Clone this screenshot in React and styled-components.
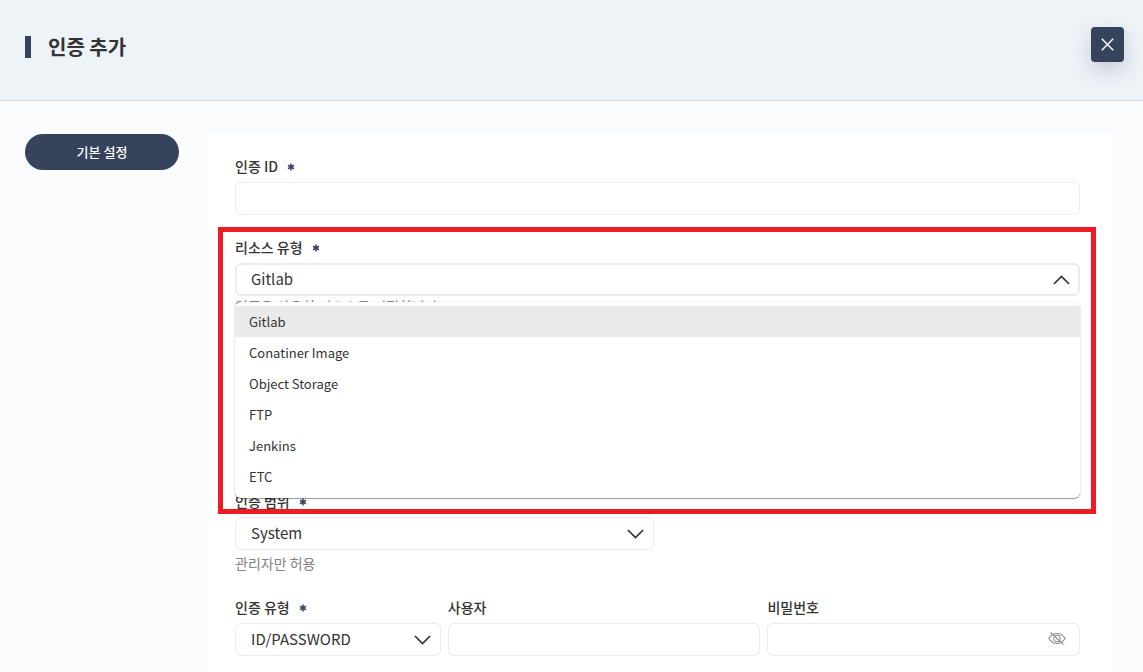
import React, { useState } from "react";
import styled, { createGlobalStyle } from "styled-components";

const navy = "#36435c";
const ink = "#333333";
const line = "#ebebeb";

const GlobalStyle = createGlobalStyle`
  *, *::before, *::after { box-sizing: border-box; }
  body {
    margin: 0;
    background: #fafbfd;
    color: ${ink};
    font-family: "Noto Sans CJK KR", "Noto Sans", sans-serif;
    font-size: 14px;
    line-height: 20px;
  }
  button, input, select { font: inherit; color: inherit; margin: 0; }
`;

const Page = styled.div`
  min-height: 100vh;
  display: flex;
  flex-direction: column;
`;

const Header = styled.header`
  display: flex;
  align-items: flex-start;
  justify-content: space-between;
  height: 101px;
  padding: 27px 19px 0 25px;
  background: #eef3f8;
  border-bottom: 1px solid #cad3e2;
`;

const Title = styled.h1`
  display: flex;
  align-items: center;
  gap: 17px;
  margin: 0;
  font-size: 20px;
  line-height: 40px;
  font-weight: 700;

  &::before {
    content: "";
    width: 6px;
    height: 22px;
    background: ${navy};
  }
`;

const CloseButton = styled.button`
  display: grid;
  place-items: center;
  width: 33px;
  height: 35px;
  padding: 0;
  border: 0;
  border-radius: 4px;
  background: ${navy};
  color: #fff;
  box-shadow: 0 8px 20px rgba(62, 57, 107, 0.22);
  cursor: pointer;
`;

const Main = styled.main`
  flex: 1;
  display: flex;
  gap: 28px;
  padding: 33px 30px 0 25px;
`;

const SideNav = styled.nav`
  flex: 0 0 154px;
`;

const NavButton = styled.button`
  width: 100%;
  height: 36px;
  padding: 0;
  border: 0;
  border-radius: 18px;
  background: ${navy};
  color: #fff;
  font-size: 13px;
  font-weight: 500;
  cursor: pointer;
`;

const Card = styled.form`
  flex: 1;
  min-width: 0;
  padding: 22px 33px 16px 28px;
  border-radius: 4px 4px 0 0;
  background: #fff;
`;

const Row = styled.div`
  display: grid;
  grid-template-columns: ${(p) => p.$columns || "1fr"};
  gap: 7px;
  margin-bottom: ${(p) => p.$after ?? 0}px;
`;

const Field = styled.div`
  position: relative;
  min-width: 0;
`;

const Label = styled.label`
  display: flex;
  align-items: center;
  gap: 9px;
  height: 20px;
  margin-bottom: 6px;
  font-weight: 500;
`;

const RequiredMark = styled.svg`
  width: 8px;
  height: 8px;
  margin-top: 2px;
  stroke: ${navy};
  stroke-width: 1.5;
`;

const Control = styled.div`
  position: relative;
  display: flex;
`;

const TextInput = styled.input`
  width: 100%;
  height: 33px;
  padding: 0 14px;
  border: 1px solid ${line};
  border-radius: 6px;
  background: #fff;
  outline: 0;
`;

const Select = styled.select`
  appearance: none;
  width: 100%;
  height: 33px;
  padding: 0 40px 2px ${(p) => (p.$open ? 14 : 15)}px;
  border: ${(p) => (p.$open ? 2 : 1)}px solid ${line};
  border-radius: 6px;
  background: #fff;
  font-size: 15px;
  line-height: 24px;
  outline: 0;
`;

const Chevron = styled.svg`
  position: absolute;
  top: 12px;
  right: 10px;
  width: 17px;
  height: 10px;
  pointer-events: none;
  transform: ${(p) => (p.$up ? "rotate(180deg)" : "none")};
`;

const RevealButton = styled.button`
  position: absolute;
  top: 7px;
  right: 14px;
  display: flex;
  padding: 0;
  border: 0;
  background: none;
  color: #8c8c8c;
  cursor: pointer;
`;

const Help = styled.p`
  margin: ${(p) => (p.$close ? 0 : 3)}px 0 0;
  color: #828282;
`;

const Options = styled.ul`
  position: absolute;
  z-index: 1;
  top: 65px;
  left: 0;
  right: 0;
  display: grid;
  min-height: 196px;
  margin: 0;
  padding: 4px 0 5px;
  border-radius: 6px;
  background: #fff;
  box-shadow: 0 1px 1px rgba(0, 0, 0, 0.4), 0 0 2px rgba(0, 0, 0, 0.12);
  list-style: none;
`;

const Option = styled.li`
  display: flex;
  align-items: center;
  padding: 0 14px;
  font-size: 13px;
  background: ${(p) => (p["aria-selected"] ? "#eaeaea" : "transparent")};
  cursor: pointer;
`;

const Highlight = styled.div`
  position: absolute;
  z-index: 2;
  top: -10px;
  left: -17px;
  right: -16px;
  height: 287px;
  border: 5px solid #ed1c24;
  pointer-events: none;
`;

const resources = ["Gitlab", "Conatiner Image", "Object Storage", "FTP", "Jenkins", "ETC"];

function FieldLabel({ htmlFor, required, children }) {
  return (
    <Label htmlFor={htmlFor}>
      {children}
      {required && (
        <RequiredMark viewBox="0 0 8 8" role="img" aria-label="필수">
          <path d="M4 .5V7.500M1 2.250 7 5.750M7 2.250 1 5.750" />
        </RequiredMark>
      )}
    </Label>
  );
}

function SelectBox({ open, children, ...rest }) {
  return (
    <Control>
      <Select $open={open} {...rest}>
        {children}
      </Select>
      <Chevron $up={open} viewBox="0 0 17 10" fill="none" stroke="#333" strokeWidth="1.7" aria-hidden="true">
        <path d="M.9 1 8.500 8.500 16.100 1" />
      </Chevron>
    </Control>
  );
}

export default function App() {
  const [resource, setResource] = useState("Gitlab");
  const [visible, setVisible] = useState(false);

  return (
    <Page>
      <GlobalStyle />
      <Header>
        <Title>인증 추가</Title>
        <CloseButton type="button" aria-label="닫기">
          <svg width="13" height="13" viewBox="0 0 13 13" fill="none" stroke="currentColor" strokeWidth="1.5">
            <path d="M.8.8 12.2 12.2M12.2.8.8 12.2" />
          </svg>
        </CloseButton>
      </Header>
      <Main>
        <SideNav>
          <NavButton type="button">기본 설정</NavButton>
        </SideNav>
        <Card>
          <Row $after={22}>
            <Field>
              <FieldLabel htmlFor="auth-id" required>인증 ID</FieldLabel>
              <TextInput id="auth-id" type="text" />
            </Field>
          </Row>
          <Row $after={175}>
            <Field>
              <FieldLabel htmlFor="resource" required>리소스 유형</FieldLabel>
              <SelectBox id="resource" open value={resource} onChange={(e) => setResource(e.target.value)}>
                {resources.map((r) => <option key={r}>{r}</option>)}
              </SelectBox>
              <Help $close>인증을 사용할 리소스를 지정합니다.</Help>
              <Options role="listbox" aria-label="리소스 유형">
                {resources.map((r) => (
                  <Option key={r} role="option" aria-selected={r === resource} onClick={() => setResource(r)}>
                    {r}
                  </Option>
                ))}
              </Options>
              <Highlight />
            </Field>
          </Row>
          <Row $columns="1fr 1fr" $after={24}>
            <Field>
              <FieldLabel htmlFor="scope" required>인증 범위</FieldLabel>
              <SelectBox id="scope"><option>System</option></SelectBox>
              <Help>관리자만 허용</Help>
            </Field>
          </Row>
          <Row $columns="206fr 313fr 313fr">
            <Field>
              <FieldLabel htmlFor="auth-type" required>인증 유형</FieldLabel>
              <SelectBox id="auth-type"><option>ID/PASSWORD</option></SelectBox>
            </Field>
            <Field>
              <FieldLabel htmlFor="user">사용자</FieldLabel>
              <TextInput id="user" type="text" />
            </Field>
            <Field>
              <FieldLabel htmlFor="password">비밀번호</FieldLabel>
              <Control>
                <TextInput id="password" type={visible ? "text" : "password"} />
                <RevealButton type="button" aria-label="비밀번호 표시" onClick={() => setVisible(!visible)}>
                  <svg width="18" height="18" viewBox="0 0 18 18" fill="none" stroke="currentColor" strokeWidth="1.1">
                    <path d="M.8 8.500C5 1.800 13 1.800 17.200 8.500 13 15.200 5 15.200.8 8.500Z" />
                    <circle cx="9" cy="8.500" r="3.200" />
                    <path d="M2.500 2.500 15.500 14.500" />
                  </svg>
                </RevealButton>
              </Control>
            </Field>
          </Row>
        </Card>
      </Main>
    </Page>
  );
}
